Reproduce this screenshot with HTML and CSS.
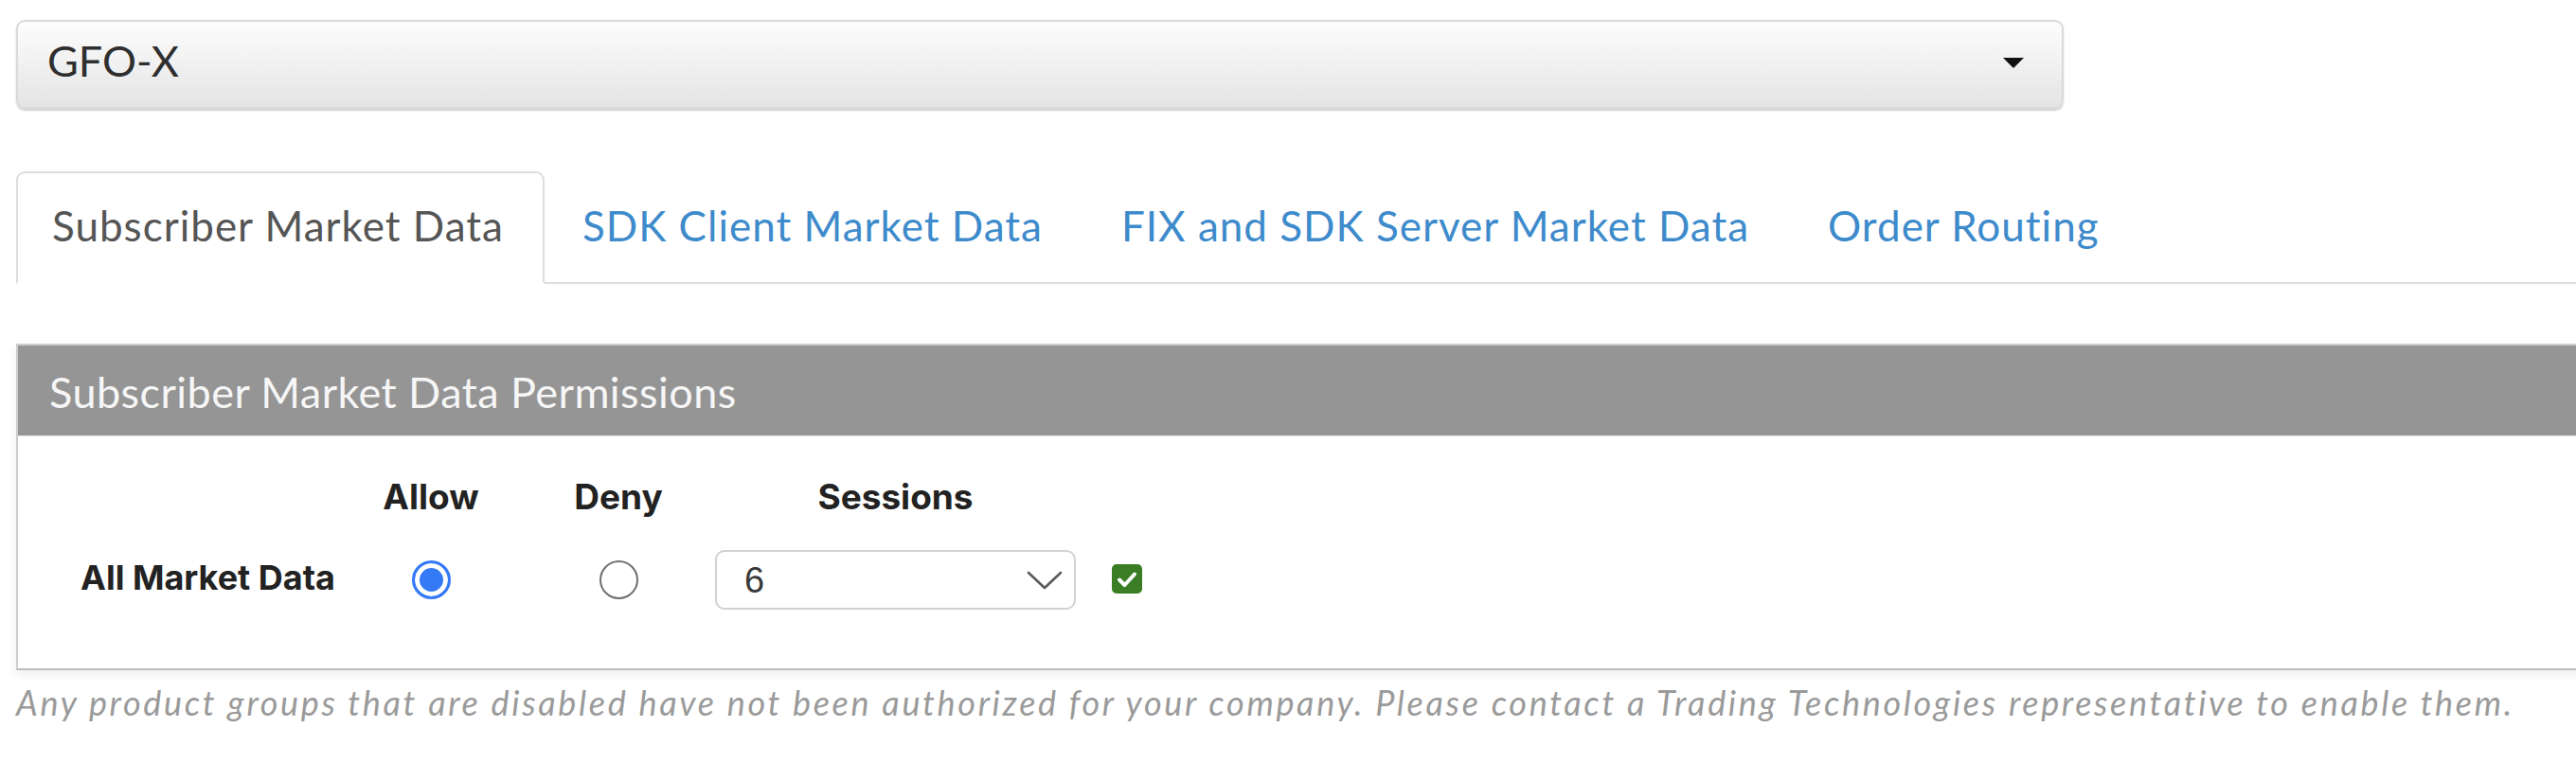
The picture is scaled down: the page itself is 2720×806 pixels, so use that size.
FILE: index.html
```html
<!DOCTYPE html>
<html lang="en">
<head>
<meta charset="utf-8">
<title>Market Data Permissions</title>
<link rel="stylesheet" href="styles.css">
</head>
<body>
<div class="page">
  <div class="exchange-select">
    <span class="exchange-value">GFO-X</span>
    <span class="caret"></span>
  </div>

  <ul class="tabs">
    <li class="tab active">Subscriber Market Data</li>
    <li class="tab">SDK Client Market Data</li>
    <li class="tab">FIX and SDK Server Market Data</li>
    <li class="tab">Order Routing</li>
  </ul>

  <section class="panel">
    <div class="panel-heading">Subscriber Market Data Permissions</div>
    <div class="panel-body">
      <div class="perm-grid">
        <div class="cell label-cell"></div>
        <div class="cell head">Allow</div>
        <div class="cell head deny-col">Deny</div>
        <div class="cell head sessions-col">Sessions</div>
        <div class="cell"></div>

        <div class="cell label-cell row-label">All Market Data</div>
        <div class="cell center"><span class="radio on"></span></div>
        <div class="cell center deny-col"><span class="radio"></span></div>
        <div class="cell sessions-col">
          <div class="session-select">
            <span class="session-value">6</span>
            <svg class="chevron" width="38" height="20" viewBox="0 0 38 20"><path d="M2 2 L19 18 L36 2" fill="none" stroke="#5a5a5a" stroke-width="2.6" stroke-linecap="round" stroke-linejoin="round"/></svg>
          </div>
        </div>
        <div class="cell check-col">
          <span class="checkbox"><svg width="22" height="18" viewBox="0 0 22 18"><path d="M3 9.5 L8.5 15 L19 3.5" fill="none" stroke="#fff" stroke-width="4" stroke-linecap="round" stroke-linejoin="round"/></svg></span>
        </div>
      </div>
    </div>
  </section>

  <p class="note">Any product groups that are disabled have not been authorized for your company. Please contact a Trading Technologies representative to enable them.</p>
</div>
</body>
</html>
```

FILE: styles.css
```css
html, body {
  margin: 0;
  padding: 0;
  background: #ffffff;
}

body {
  overflow: hidden;
  font-family: Lato, "Open Sans", sans-serif;
  color: #333333;
}

.page {
  padding: 21px 0 0 17px;
}

.exchange-select {
  box-sizing: border-box;
  width: 2162px;
  height: 94px;
  display: flex;
  align-items: center;
  justify-content: space-between;
  padding: 0 40px 8px 31px;
  border: 2px solid #dadada;
  border-radius: 9px;
  background: linear-gradient(#fdfdfd, #e4e4e4);
  box-shadow: 0 2px 2px rgba(0, 0, 0, 0.18);
}

.exchange-value {
  font-size: 45px;
  line-height: 54px;
  color: #2f2f2f;
}

.caret {
  width: 0;
  height: 0;
  border-left: 11px solid transparent;
  border-right: 11px solid transparent;
  border-top: 11px solid #111111;
  margin-top: 4px;
}

.tabs {
  list-style: none;
  margin: 66px -40px 0 0;
  padding: 0;
  display: flex;
  border-bottom: 2px solid #dddddd;
}

.tab {
  padding: 29px 41px 33px 36px;
  margin-right: 2px;
  margin-bottom: -2px;
  font-size: 44px;
  line-height: 53px;
  letter-spacing: 1px;
  color: #3e8bcc;
  border: 2px solid transparent;
  border-radius: 9px 9px 0 0;
}

.tab.active {
  color: #555555;
  background: #ffffff;
  border-color: #dddddd;
  border-bottom-color: #ffffff;
}

.panel {
  margin: 63px -60px 0 0;
  border: 2px solid #cdcdcd;
  border-bottom-color: #bdbdbd;
  background: #ffffff;
  box-shadow: 0 4px 10px rgba(0, 0, 0, 0.07);
}

.panel-heading {
  background: #959595;
  color: #f6f6f6;
  font-size: 45px;
  line-height: 54px;
  letter-spacing: 0.45px;
  padding: 22px 33px 19px;
  border-bottom: 1px solid #e2e2e2;
}

.panel-body {
  padding: 41px 0 62px;
}

.perm-grid {
  display: grid;
  grid-template-columns: 376px 120px 198px 423px 70px;
  row-gap: 33px;
  align-items: center;
}

.cell {
  display: flex;
  align-items: center;
}

.head {
  justify-content: center;
  font-family: Inter, "Noto Sans", sans-serif;
  font-weight: 700;
  font-size: 37px;
  line-height: 46px;
  color: #222222;
}

.center {
  justify-content: center;
}

.deny-col {
  padding-left: 78px;
}

.sessions-col {
  padding-left: 42px;
}

.check-col {
  padding-left: 38px;
}

.label-cell {
  padding-left: 66px;
}

.row-label {
  font-family: Inter, "Noto Sans", sans-serif;
  font-weight: 700;
  font-size: 36px;
  line-height: 44px;
  color: #222222;
  padding-bottom: 6px;
}

.radio {
  box-sizing: border-box;
  width: 41px;
  height: 41px;
  border-radius: 50%;
  border: 2.5px solid #6f6f6f;
  background: #ffffff;
}

.radio.on {
  border: 3px solid #3479f6;
  background: #3479f6;
  box-shadow: inset 0 0 0 5px #ffffff;
}

.session-select {
  box-sizing: border-box;
  width: 381px;
  height: 63px;
  display: flex;
  align-items: center;
  justify-content: space-between;
  padding: 0 12px 0 29px;
  border: 2px solid #d2d2d2;
  border-radius: 10px;
  background: #ffffff;
}

.session-value {
  font-family: "Liberation Sans", Arial, sans-serif;
  font-size: 38px;
  line-height: 44px;
  color: #3a3a3a;
}

.chevron {
  display: block;
}

.checkbox {
  box-sizing: border-box;
  width: 32px;
  height: 31px;
  border-radius: 5px;
  background: #3b7d24;
  display: flex;
  align-items: center;
  justify-content: center;
  margin-bottom: 2px;
}

.checkbox svg {
  display: block;
}

.note {
  margin: 13px 0 0;
  font-style: italic;
  font-size: 36px;
  line-height: 43px;
  letter-spacing: 2.67px;
  color: #9a9a9a;
  white-space: nowrap;
}
```
